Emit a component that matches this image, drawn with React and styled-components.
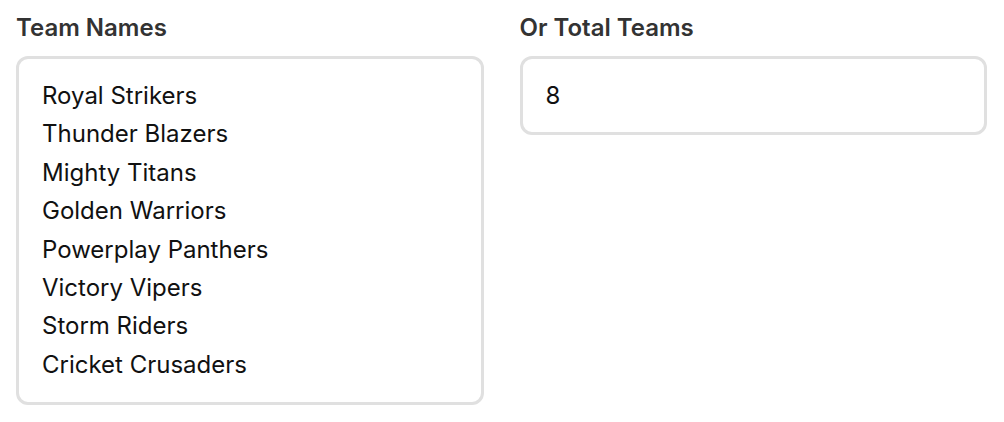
import styled, { createGlobalStyle } from "styled-components";

const GlobalStyle = createGlobalStyle`
  html, body {
    margin: 0;
    padding: 0;
    background: #ffffff;
  }
  body {
    font-family: Inter, "Noto Sans", sans-serif;
  }
  * {
    box-sizing: border-box;
  }
`;

const Form = styled.div`
  display: grid;
  grid-template-columns: 1fr 1fr;
  column-gap: 36px;
  align-items: start;
  padding: 10px 17px 0 16px;
`;

const Field = styled.div`
  display: flex;
  flex-direction: column;
  gap: 10px;
`;

const Label = styled.label`
  font-size: 24px;
  line-height: 36px;
  font-weight: 600;
  color: #333333;
`;

const baseInput = `
  width: 100%;
  font-family: Inter, "Noto Sans", sans-serif;
  font-size: 24px;
  color: #111111;
  background: #ffffff;
  border: 3px solid #e0e0e0;
  border-radius: 12px;
  outline: none;
  padding: 0 22px 0 23px;
  margin: 0;
`;

const NamesArea = styled.textarea`
  ${baseInput}
  display: block;
  height: 349px;
  padding-top: 18px;
  padding-bottom: 18px;
  line-height: 38.4px;
  resize: none;
  overflow: hidden;
`;

const CountInput = styled.input`
  ${baseInput}
  height: 79px;
  line-height: 36px;
`;

const teams = [
  "Royal Strikers",
  "Thunder Blazers",
  "Mighty Titans",
  "Golden Warriors",
  "Powerplay Panthers",
  "Victory Vipers",
  "Storm Riders",
  "Cricket Crusaders",
];

export default function App() {
  return (
    <>
      <GlobalStyle />
      <Form>
        <Field>
          <Label htmlFor="team-names">Team Names</Label>
          <NamesArea id="team-names" readOnly defaultValue={teams.join("\n")} />
        </Field>
        <Field>
          <Label htmlFor="total-teams">Or Total Teams</Label>
          <CountInput id="total-teams" type="text" readOnly defaultValue="8" />
        </Field>
      </Form>
    </>
  );
}
